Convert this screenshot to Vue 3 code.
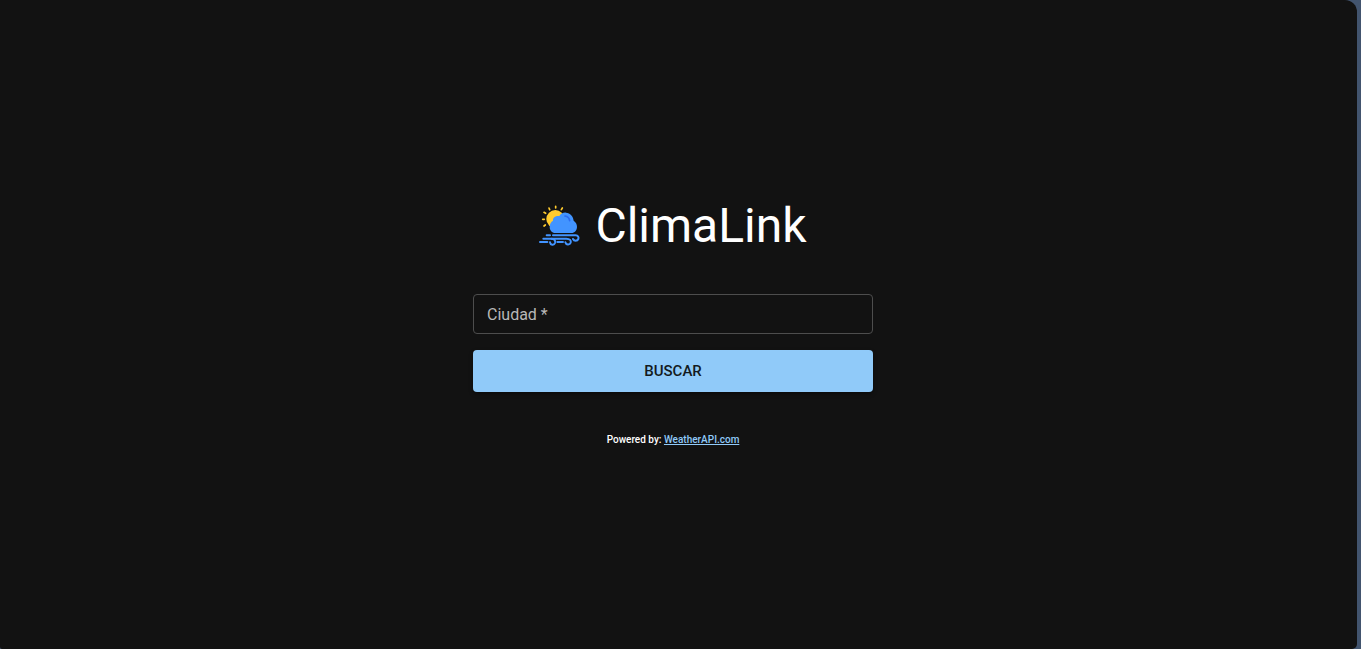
<script setup>
import { ref } from 'vue'

const city = ref('')
</script>

<template>
  <div class="backdrop">
    <main class="screen">
      <h1 class="brand">
        <svg class="brand-icon" viewBox="27 29 126 126" aria-hidden="true">
          <g class="rays">
            <path d="M77 33v5M57 38l2 5M97 38l-3 5M42 51l5 3M38 72h5M42 92l4-3" />
          </g>
          <circle class="sun" cx="76" cy="71" r="27" />
          <path
            class="cloud"
            d="M76 113C66 113 59 105 59 95C59 86 63 79 69 76C68 67 76 61 88 62C92 55 100 51 108 52C121 53 129 62 131 76C137 80 141 86 141 94C141 105 134 113 124 113Z"
          />
          <path class="shade" d="M105 62C113 63 118 68 119 76" />
          <g class="wind">
            <path d="M50 120h10M69 120h68C144 120 147 126 145 131C142 138 132 138 129 131" />
            <path d="M40 130h69C120 130 124 136 122 142C119 150 108 149 106 141" />
            <path d="M82 140h17M30 140h22" />
            <path d="M65 130C74 130 77 137 75 143C72 151 61 149 60 141" />
          </g>
        </svg>
        <span>ClimaLink</span>
      </h1>

      <form class="search" @submit.prevent>
        <div class="field">
          <input id="city" v-model="city" type="text" required placeholder=" " />
          <label for="city">Ciudad *</label>
        </div>
        <button type="submit">BUSCAR</button>
      </form>

      <footer class="credit">
        Powered by: <a href="https://www.weatherapi.com/">WeatherAPI.com</a>
      </footer>
    </main>
  </div>
</template>

<style>
body {
  background: #121212;
}
</style>

<style scoped>
.backdrop {
  background: #42546e;
  padding-right: 4px;
}

.screen {
  box-sizing: border-box;
  min-height: 100vh;
  padding: 0 11px 0 0;
  display: flex;
  flex-direction: column;
  align-items: center;
  justify-content: center;
  background: #121212;
  border-radius: 0 12px 5px 2px;
  color: #fff;
  font-family: Roboto, "Liberation Sans", sans-serif;
}

.brand {
  display: flex;
  align-items: center;
  gap: 14px;
  margin: 0 0 39px;
  font-size: 48px;
  font-weight: 400;
  line-height: 58px;
}

.brand-icon {
  width: 42px;
  height: 42px;
}

.rays {
  fill: none;
  stroke: #ffcb2e;
  stroke-width: 5;
  stroke-linecap: round;
}

.sun {
  fill: #ffcb2e;
}

.cloud {
  fill: #4294ff;
}

.shade {
  fill: none;
  stroke: #2b6cf0;
  stroke-width: 5;
  stroke-linecap: round;
}

.wind {
  fill: none;
  stroke: #4294ff;
  stroke-width: 6;
  stroke-linecap: round;
}

.search {
  display: flex;
  flex-direction: column;
  gap: 16px;
  width: 100%;
  max-width: 400px;
}

.field {
  position: relative;
}

.field input {
  box-sizing: border-box;
  display: block;
  width: 100%;
  height: 40px;
  padding: 8px 13px;
  border: 1px solid #4d4d4d;
  border-radius: 4px;
  outline: none;
  background: transparent;
  color: #fff;
  font: 400 16px/24px Roboto, "Liberation Sans", sans-serif;
}

.field input:focus {
  border-color: #90caf9;
}

.field label {
  position: absolute;
  top: 9px;
  left: 14px;
  color: #b8b8b8;
  font-size: 16px;
  line-height: 24px;
  pointer-events: none;
}

.field input:not(:placeholder-shown) + label {
  top: -8px;
  padding: 0 4px;
  background: #121212;
  font-size: 12px;
  line-height: 16px;
}

button {
  height: 42px;
  padding: 8px 22px;
  border: 0;
  border-radius: 4px;
  background: #90caf9;
  box-shadow: 0 2px 4px rgba(0, 0, 0, 0.4);
  color: #131a20;
  font: 500 15px/26px Roboto, "Liberation Sans", sans-serif;
  cursor: pointer;
}

.credit {
  margin-top: 36px;
  font-size: 10px;
  font-weight: 500;
  line-height: 24px;
}

.credit a {
  color: #90caf9;
}
</style>
